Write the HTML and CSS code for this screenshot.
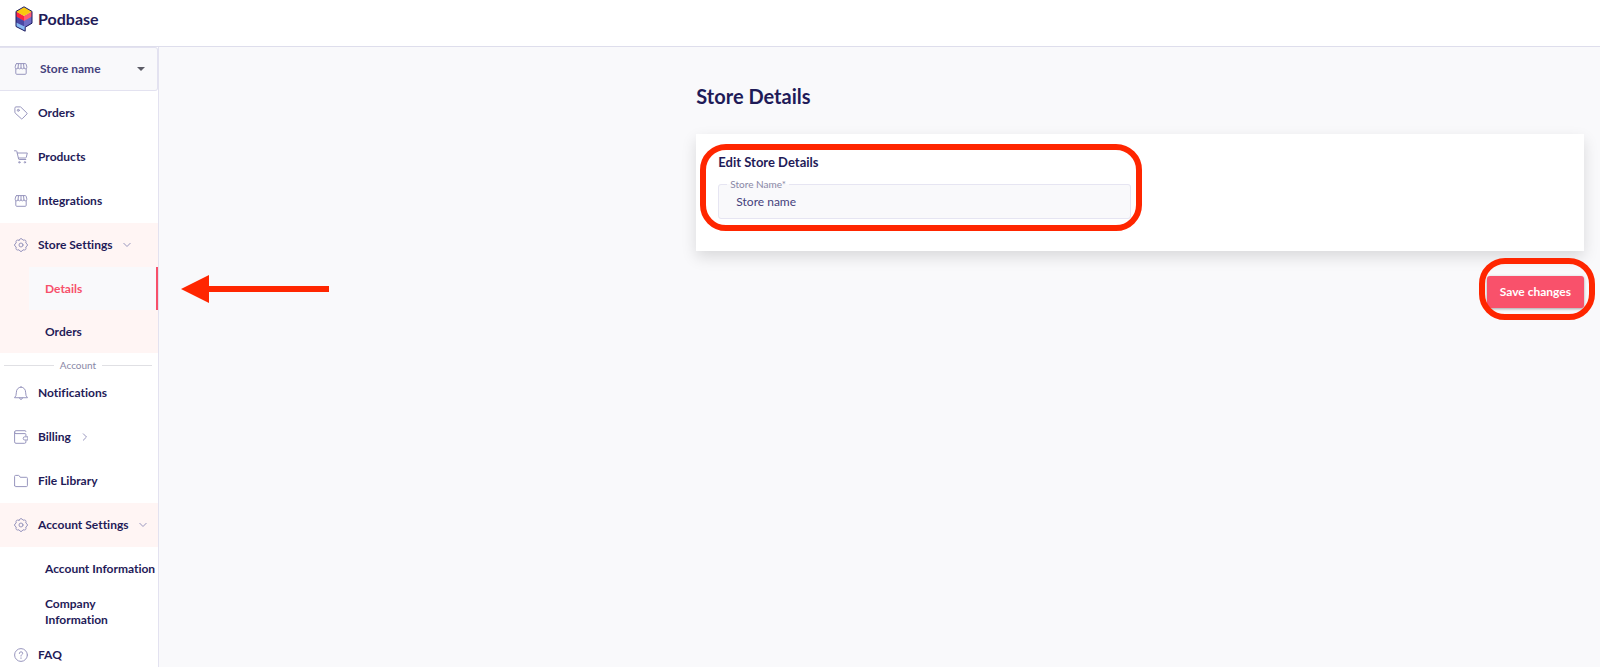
FILE: index.html
```html
<!DOCTYPE html>
<html lang="en">
<head>
<meta charset="utf-8">
<title>Podbase – Store Details</title>
<meta name="viewport" content="width=device-width, initial-scale=1">
<link rel="stylesheet" href="styles.css">
</head>
<body>
<svg class="sprite" aria-hidden="true">
  <symbol id="i-store" viewBox="0 0 14 14"><path d="M2.700 1.600h8.600q.6 0 .8.600l.7 2.700v.5a1.450 1.450 0 0 1-2.900 0 1.450 1.450 0 0 1-2.900 0 1.450 1.450 0 0 1-2.900 0 1.450 1.450 0 0 1-2.900 0v-.5l.7-2.700q.2-.6.8-.6zM4.100 5.200l.4-3.400M7 5.200V1.800M9.900 5.200l-.4-3.400M1.800 6.800v4.500q0 1 1 1h8.400q1 0 1-1V6.800"/></symbol>
  <symbol id="i-tag" viewBox="0 0 14 14"><path d="M.9 1.900q0-1 1-1h4.300q.4 0 .7.3l6 5.800q.5.500 0 1l-4.600 4.700q-.5.500-1 0L1.200 7.100q-.3-.3-.3-.7z"/><circle cx="4.300" cy="4.300" r="1"/></symbol>
  <symbol id="i-cart" viewBox="0 0 14 14"><path d="M.5.800h1.700q.5 0 .6.500L4.600 9q.1.500.6.500h6.600M3.300 3h10l-1 4.300q-.2.700-.8.700H4.400"/><circle cx="5.300" cy="12.300" r=".7"/><circle cx="10.900" cy="12.300" r=".7"/></symbol>
  <symbol id="i-gear" viewBox="0 0 14 14"><path d="M5 2.200Q7-1.200 9 2.200 12.800 1.200 11.800 5 15.200 7 11.800 9 12.800 12.800 9 11.800 7 15.200 5 11.800 1.200 12.800 2.200 9-1.200 7 2.200 5 1.200 1.200 5 2.200z"/><circle cx="7" cy="7" r="2"/></symbol>
  <symbol id="i-bell" viewBox="0 0 14 14"><path d="M.8 11.500q1.600-1.100 1.600-5.300A4.600 4.900 0 0 1 7 1.200a4.600 4.900 0 0 1 4.600 5q0 4.200 1.600 5.300zM5.500 12q.3 1.400 1.500 1.400T8.500 12M7 1.200V.5"/></symbol>
  <symbol id="i-wallet" viewBox="0 0 14 14"><path d="M11.900 5.800V4.500q0-.9-.9-.9H2A1.400 1.400 0 0 1 .6 2.200Q.6.700 2 .7h9.200q.7 0 .7.700M.6 2.200v9.700q0 1.400 1.400 1.400h8.600q1.300 0 1.300-1.300v-1.300M13.500 6.800h-2.700a1.600 1.600 0 0 0 0 3.200h2.700z"/></symbol>
  <symbol id="i-folder" viewBox="0 0 14 14"><path d="M.6 11.600V2.400q0-1 1-1h2.900q.5 0 .8.400l.9 1.500h6.200q1 0 1 1v7.300q0 1-1 1H1.600q-1 0-1-1z"/></symbol>
  <symbol id="i-help" viewBox="0 0 14 14"><circle cx="7" cy="7" r="6.400"/><path d="M5.300 5.500Q5.300 3.800 7 3.800t1.700 1.500q0 .8-.9 1.300-.8.500-.8 1.500M7 9.800v.7"/></symbol>
  <symbol id="i-down" viewBox="0 0 8 8"><path d="M.8 2.300 4 5.500l3.200-3.200"/></symbol>
  <symbol id="i-right" viewBox="0 0 8 8"><path d="M2.300.8 5.500 4 2.300 7.200"/></symbol>
</svg>

<div class="app">
  <header class="topbar">
    <a class="brand" href="#">
      <svg class="brand-mark" viewBox="0 0 18 26" aria-hidden="true">
        <path fill="#6f6cc4" d="M1 5.500 9 10l8-4.500v11.700l-7 4V25l-9-5z"/>
        <path fill="#ff5a72" d="M9 10l8-4.500v5L9 15z"/>
        <path fill="#ff2440" d="M1 5.500 9 10v5l-8-4.500z"/>
        <path fill="#f9c80e" d="M9 1l8 4.500L9 10 1 5.500z"/>
        <path fill="#4a47a3" d="M1 10.500 9 15v5.700l-8-4.200z"/>
        <path fill="#86b8f2" d="M1 16.500l9 4.200V25l-9-4.500z"/>
        <path fill="none" stroke="#1b1a5e" stroke-linejoin="round" d="M9 .8l8 4.600v11.800l-6.800 4v4L1 20.500V5.400z"/>
      </svg>
      <span>Podbase</span>
    </a>
  </header>

  <div class="body">
    <nav class="sidebar" aria-label="Main">
      <div class="store-picker">
        <svg class="icon"><use href="#i-store"/></svg>
        <select class="store-select" aria-label="Store"><option>Store name</option></select>
        <svg class="caret" viewBox="0 0 8 4" aria-hidden="true"><path d="M0 0h8L4 4z"/></svg>
      </div>

      <a class="row" href="#"><svg class="icon"><use href="#i-tag"/></svg>Orders</a>
      <a class="row" href="#"><svg class="icon"><use href="#i-cart"/></svg>Products</a>
      <a class="row" href="#"><svg class="icon"><use href="#i-store"/></svg>Integrations</a>
      <div class="tinted">
        <button class="row" type="button" aria-expanded="true"><svg class="icon"><use href="#i-gear"/></svg>Store Settings<svg class="chevron"><use href="#i-down"/></svg></button>
        <a class="sub active" href="#" aria-current="page">Details</a>
        <a class="sub" href="#">Orders</a>
      </div>

      <div class="divider">Account</div>

      <a class="row" href="#"><svg class="icon"><use href="#i-bell"/></svg>Notifications</a>
      <button class="row" type="button" aria-expanded="false"><svg class="icon"><use href="#i-wallet"/></svg>Billing<svg class="chevron"><use href="#i-right"/></svg></button>
      <a class="row" href="#"><svg class="icon"><use href="#i-folder"/></svg>File Library</a>
      <div class="tinted">
        <button class="row" type="button" aria-expanded="true"><svg class="icon"><use href="#i-gear"/></svg>Account Settings<svg class="chevron"><use href="#i-down"/></svg></button>
      </div>
      <a class="sub" href="#">Account Information</a>
      <a class="sub" href="#">Company<br>Information</a>
      <a class="row" href="#"><svg class="icon"><use href="#i-help"/></svg>FAQ</a>
    </nav>

    <main class="main">
      <svg class="arrow" viewBox="0 0 148 28" aria-hidden="true"><path d="M0 14 28 0v11h120v6H28v11z"/></svg>
      <form class="content">
        <h1 class="title">Store Details</h1>
        <section class="card">
          <div class="fields">
            <div class="block">
              <h2 class="subtitle">Edit Store Details</h2>
              <fieldset class="field">
                <legend class="legend"><label for="store-name">Store Name*</label></legend>
                <input class="input" id="store-name" type="text" value="Store name">
              </fieldset>
              <span class="ring ring-block"></span>
            </div>
          </div>
        </section>
        <div class="actions">
          <div class="save-wrap">
            <button class="save" type="button">Save changes</button>
            <span class="ring ring-save"></span>
          </div>
        </div>
      </form>
    </main>
  </div>
</div>
</body>
</html>
```
FILE: styles.css
```css
* { box-sizing: border-box; }

body {
  margin: 0;
  background: #f9f9fb;
  color: #1f1b58;
  font: 700 12px/16px Lato, "Open Sans", sans-serif;
  font-variant-ligatures: none;
}

a { color: inherit; text-decoration: none; }

button, input, select {
  margin: 0;
  border: 0;
  background: none;
  color: inherit;
  font: inherit;
}

.sprite { position: absolute; width: 0; height: 0; }

.app {
  display: flex;
  flex-direction: column;
  height: 100vh;
  overflow: hidden;
}

.topbar {
  display: flex;
  flex: none;
  padding: 6px 15px 14px;
  background: #fff;
  border-bottom: 1px solid #dedeec;
}

.brand {
  display: flex;
  align-items: center;
  gap: 5px;
  font-size: 16px;
}

.brand-mark { width: 18px; height: 26px; }

.body { display: flex; flex: 1; min-height: 0; }

.sidebar {
  flex: none;
  width: 159px;
  overflow: hidden;
  background: #fff;
  border-right: 1px solid #e3e2f0;
}

.icon, .chevron {
  flex: none;
  fill: none;
  stroke: #9896be;
  stroke-linecap: round;
  stroke-linejoin: round;
}

.icon { width: 14px; height: 14px; }

.chevron { width: 8px; height: 8px; }

.store-picker {
  display: flex;
  align-items: center;
  height: 44px;
  padding: 0 12px 0 14px;
  background: #f9f9fb;
  border: solid #e3e2f0;
  border-width: 1px 1px 1px 0;
  border-radius: 0 3px 3px 0;
  color: #45417c;
}

.store-select {
  flex: 1;
  min-width: 0;
  padding: 0 0 0 12px;
  appearance: none;
}

.caret { width: 8px; height: 4px; fill: #5c5c66; }

.row {
  display: flex;
  align-items: center;
  gap: 10px;
  width: 100%;
  height: 44px;
  padding: 0 10px 0 14px;
  text-align: left;
  white-space: nowrap;
}

.tinted { background: #fff5f4; }

.sub {
  display: flex;
  align-items: center;
  min-height: 43px;
  margin-left: 29px;
  padding-left: 16px;
}

.sub.active {
  background: #f9f9fb;
  border-right: 2px solid #f7506a;
  color: #f7506a;
}

.divider {
  display: flex;
  align-items: center;
  gap: 6px;
  height: 18px;
  padding: 6px 6px 0 4px;
  color: #8a88a6;
  font-weight: 400;
  font-size: 10px;
}

.divider::before, .divider::after {
  content: "";
  flex: 1;
  height: 1px;
  background: #e0e0e4;
}

.main {
  position: relative;
  flex: 1;
  padding: 37px 16px;
}

.arrow {
  position: absolute;
  top: 228px;
  left: 22px;
  width: 148px;
  height: 28px;
  fill: #ff2600;
}

.content { width: 63%; margin-left: auto; }

.title {
  margin: 0 0 26px;
  font-size: 20px;
  line-height: 24px;
}

.card {
  padding: 20px 22px 32px;
  background: #fff;
  box-shadow: 0 6px 14px rgba(0, 0, 0, .13);
}

.fields {
  display: grid;
  grid-template-columns: 1fr 1fr;
  gap: 18px;
}

.block { position: relative; }

.subtitle {
  margin: 0 0 7px;
  font-size: 13px;
  line-height: 16px;
}

.field {
  min-width: 0;
  margin: 0;
  padding: 0;
  background: #f9f9fb;
  border: 1px solid #e6e5f2;
  border-radius: 3px;
}

.legend {
  margin-left: 8px;
  padding: 0 3px;
  color: #8a88a6;
  font-weight: 400;
  font-size: 10px;
  line-height: 14px;
}

.input {
  display: block;
  width: 100%;
  height: 27px;
  padding: 0 17px 6px;
  color: #45417c;
  font-weight: 400;
}

.ring {
  position: absolute;
  border: 6px solid #ff2600;
  border-radius: 26px;
  pointer-events: none;
}

.ring-block { inset: -10px -11px -12px -18px; }

.ring-save { inset: -18px -11px -12px -8px; }

.actions {
  display: flex;
  justify-content: flex-end;
  padding-top: 25px;
}

.save-wrap { position: relative; }

.save {
  display: block;
  height: 32px;
  padding: 0 13px;
  background: #f9516b;
  border-radius: 3px;
  box-shadow: 0 1px 3px rgba(0, 0, 0, .35);
  color: #fff;
}
```
